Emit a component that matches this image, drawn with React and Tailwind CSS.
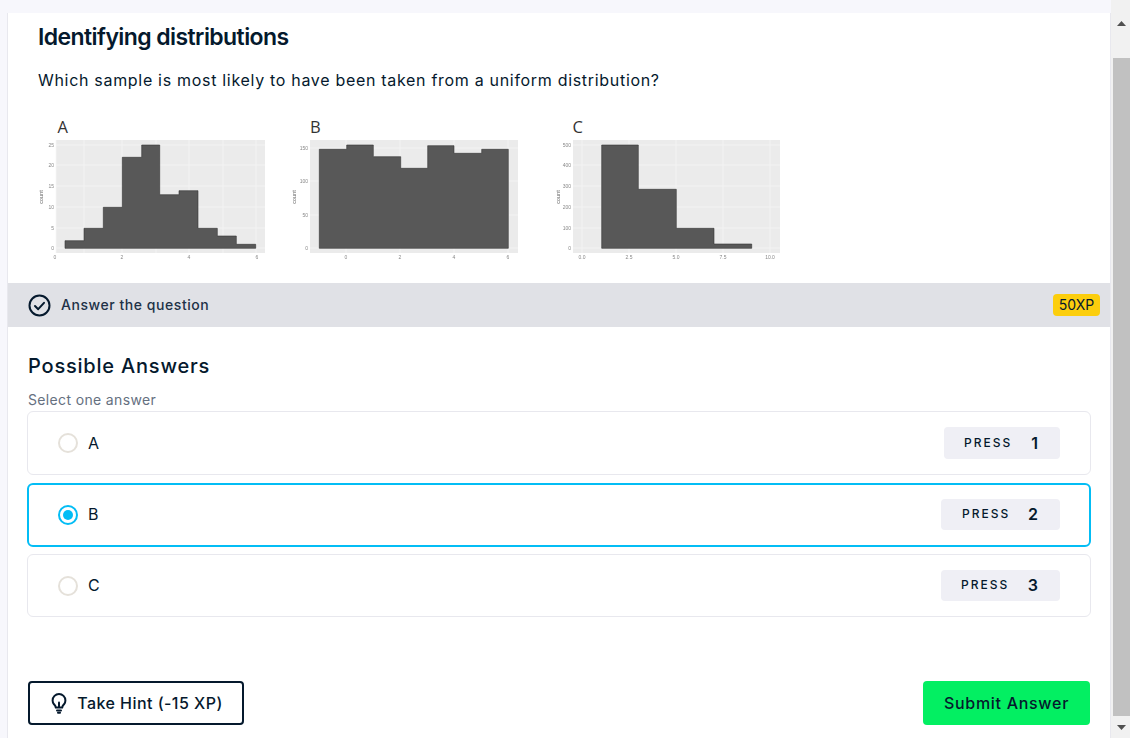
import React from "react";

const font = { fontFamily: "Inter, 'Noto Sans', sans-serif" };

function Panel({ x, w, xs, ys, bars, xt, yt }) {
  return (
    <g>
      <rect x={x} y={30} width={w} height={113} fill="#ebebeb" />
      {xs.map((v) => (
        <line key={"v" + v} x1={v} x2={v} y1={30} y2={143} stroke="#f6f6f6" strokeWidth="0.7" />
      ))}
      {ys.map((v) => (
        <line key={"h" + v} x1={x} x2={x + w} y1={v} y2={v} stroke="#f6f6f6" strokeWidth="0.7" />
      ))}
      <path d={bars} fill="#595959" stroke="#333" strokeWidth="0.6" />
      {yt.map(([label, y]) => (
        <text key={label} x={x - 2} y={y + 1.5} fontSize="5" textAnchor="end" fill="#888">{label}</text>
      ))}
      {xt.map(([label, px]) => (
        <text key={label} x={px} y={149} fontSize="5" textAnchor="middle" fill="#888">{label}</text>
      ))}
    </g>
  );
}

function steps(xs, tops, base = 138.3) {
  let d = `M${xs[0]} ${base}`;
  tops.forEach((t, i) => {
    d += `L${xs[i]} ${t}L${xs[i + 1]} ${t}`;
  });
  return d + `L${xs[xs.length - 1]} ${base}Z`;
}

function Charts() {
  const ox = 38;
  const sx = (arr) => arr.map((v) => v - ox);
  const sy = (arr) => arr.map((v) => v - 110);
  return (
    <svg width="760" height="160" viewBox="0 0 760 160" className="block" style={{ fontFamily: "'Liberation Sans', sans-serif" }}>
      <defs>
        <filter id="soft" x="-5%" y="-5%" width="110%" height="110%">
          <feGaussianBlur stdDeviation="0.6" />
        </filter>
      </defs>
      <g fill="#333" fontFamily="'Open Sans', sans-serif" fontSize="16.5" fontWeight="500">
        <text x="19.500" y="22.700">A</text>
        <text x="272" y="22.700">B</text>
        <text x="534.500" y="22.700">C</text>
      </g>
      <g filter="url(#soft)">
        <Panel
          x={18} w={209}
          xs={[18, 46, 84, 118, 151, 185, 218]}
          ys={[35, 55, 76, 97, 118, 138]}
          bars={steps(sx([65, 84, 103.3, 122.3, 141.7, 159.7, 179, 198, 217.3, 236.3, 255.7]), sy([240.7, 228.3, 207.3, 157.3, 145, 194.7, 190.7, 228.3, 236, 244.3]))}
          yt={[["25", 35], ["20", 55], ["15", 76], ["10", 97], ["5", 118], ["0", 138]]}
          xt={[["0", 17], ["2", 84], ["4", 151], ["6", 219]]}
        />
        <Panel
          x={272} w={208}
          xs={[308, 362, 416, 470]}
          ys={[38, 71, 105, 138]}
          bars={steps(sx([319.3, 346.7, 373.3, 400.7, 427.7, 454, 481.7, 508.3]), sy([149.3, 145, 156.7, 168.3, 145.7, 153.3, 149.3]))}
          yt={[["150", 38], ["100", 71], ["50", 105], ["0", 138]]}
          xt={[["0", 308], ["2", 362], ["4", 416], ["6", 470]]}
        />
        <Panel
          x={535} w={207}
          xs={[544, 591, 638, 685, 732]}
          ys={[35, 55, 76, 97, 118, 138]}
          bars={steps(sx([601.7, 638.3, 676.3, 714, 751.7]), sy([145, 189.3, 228.3, 244]))}
          yt={[["500", 35], ["400", 55], ["300", 76], ["200", 97], ["100", 118], ["0", 138]]}
          xt={[["0.0", 544], ["2.5", 591], ["5.0", 638], ["7.5", 685], ["10.0", 732]]}
        />
        <g fontSize="5.500" textAnchor="middle" fill="#666">
          <text transform="translate(5 87) rotate(-90)">count</text>
          <text transform="translate(258 87) rotate(-90)">count</text>
          <text transform="translate(522 87) rotate(-90)">count</text>
        </g>
      </g>
    </svg>
  );
}

function Answer({ label, n, selected, chip, height, mt, lift }) {
  return (
    <div
      className={`${mt} ${height} flex items-center justify-between rounded-md bg-white ${
        selected ? "border-2 border-[#03bdf5] px-[29px]" : "border border-[#e8e8ee] px-[30px]"
      }`}
    >
      <div className="flex items-center gap-[10px]">
        {selected ? (
          <span className="flex h-5 w-5 items-center justify-center rounded-full border-2 border-[#03bdf5]">
            <span className="h-[10px] w-[10px] rounded-full bg-[#03bdf5]" />
          </span>
        ) : (
          <span className="h-5 w-5 rounded-full border-2 border-[#e5e1da]" />
        )}
        <span className={`text-[16px] leading-5 text-[#05192d] ${lift}`}>{label}</span>
      </div>
      <div className={`flex items-center justify-between rounded bg-[#efeff5] pr-[22px] ${chip}`}>
        <span className="pb-px text-[12px] font-medium tracking-[2px] text-[#05192d]">PRESS</span>
        <span className={`text-[16px] font-semibold text-[#05192d] ${lift}`}>{n}</span>
      </div>
    </div>
  );
}

export default function App() {
  return (
    <div className="flex h-[738px] w-[1130px] overflow-hidden bg-white text-[#05192d]" style={font}>
      <div className="flex h-full w-[1111px] flex-col bg-[#f7f7fc] pt-[13px] pl-[7px]">
        <div className="flex h-full flex-col overflow-hidden border-x border-[#e8e8ee] bg-white">
          <div className="pl-[30px]">
            <h1 className="mt-[8px] text-[23px] font-semibold leading-8 tracking-[-0.58px]">Identifying distributions</h1>
            <p className="mt-[15px] text-[16px] leading-6 tracking-[0.69px]">
              Which sample is most likely to have been taken from a uniform distribution?
            </p>
            <div className="mt-[18px]">
              <Charts />
            </div>
          </div>
          <div className="mt-[13px] flex h-[44px] items-center justify-between bg-[#e0e1e6] pl-[20px] pr-[10px]">
            <div className="flex items-center gap-[10px]">
              <svg width="23" height="23" viewBox="0 0 23 23" fill="none">
                <circle cx="11.5" cy="11.5" r="10" stroke="#05192d" strokeWidth="2" />
                <path d="M7 12l3.2 3.2L16 8.8" stroke="#05192d" strokeWidth="2" strokeLinecap="round" strokeLinejoin="round" />
              </svg>
              <span className="pb-[2px] text-[14px] font-medium tracking-[0.55px] text-[#213147]">Answer the question</span>
            </div>
            <span className="flex h-[22px] w-[47px] items-center justify-center rounded bg-[#fcce0d] pb-px text-[14px] text-[#05192d]">50XP</span>
          </div>
          <div className="flex flex-1 flex-col pl-[19px] pr-[19px]">
            <h2 className="mt-[25px] pl-px text-[20px] font-medium leading-[28px] tracking-[0.8px]">Possible Answers</h2>
            <p className="mt-[11px] pl-px text-[14px] leading-[18px] tracking-[0.35px] text-[#65707f]">Select one answer</p>
            <Answer mt="mt-[2px]" height="h-[64px]" label="A" n="1" lift="" chip="h-[32px] w-[116px] pl-[20px]" />
            <Answer mt="mt-[8px]" height="h-[64px]" label="B" n="2" lift="pb-[2px]" selected chip="h-[31px] w-[119px] pl-[21px] mb-px" />
            <Answer mt="mt-[7px]" height="h-[63px]" label="C" n="3" lift="pb-[2px]" chip="h-[31px] w-[119px] pl-[20px]" />
            <div className="mt-[64px] flex items-center justify-between pl-px pr-px">
              <button className="flex h-[44px] w-[216px] items-center justify-center gap-[8px] rounded border-2 border-[#05192d] bg-white text-[16px] font-medium tracking-[0.45px]">
                <svg width="20" height="22" viewBox="0 0 20 22" fill="none" stroke="#05192d" strokeWidth="2" strokeLinecap="round" strokeLinejoin="round">
                  <path d="M6.8 15.5c-.2-1.4-.8-2.2-1.8-3.2A6.3 6.3 0 0 1 3.6 8.4a6.4 6.4 0 0 1 12.8 0c0 1.500-.5 2.800-1.400 3.900-1 1-1.600 1.800-1.800 3.200z" />
                  <path d="M10 15V10.500" />
                  <path d="M8 18.500h4" />
                  <path d="M9 20.700h2" />
                </svg>
                Take Hint (-15 XP)
              </button>
              <button className="flex h-[44px] w-[167px] items-center justify-center rounded bg-[#03ef62] text-[16px] font-medium tracking-[0.7px] text-[#05192d]">
                Submit Answer
              </button>
            </div>
          </div>
        </div>
      </div>
      <div className="flex h-full w-[19px] flex-col items-center bg-[#f1f1f1] pl-[2px]">
        <div className="flex h-[58px] w-[17px] items-start justify-center pt-[21px]">
          <svg width="9" height="5" viewBox="0 0 9 5"><path d="M4.5 0L9 5H0z" fill="#505050" /></svg>
        </div>
        <div className="h-[658px] w-[17px] bg-[#c1c1c1]" />
        <div className="flex flex-1 w-[17px] items-center justify-center">
          <svg width="9" height="5" viewBox="0 0 9 5"><path d="M0 0h9L4.500 5z" fill="#505050" /></svg>
        </div>
      </div>
    </div>
  );
}
